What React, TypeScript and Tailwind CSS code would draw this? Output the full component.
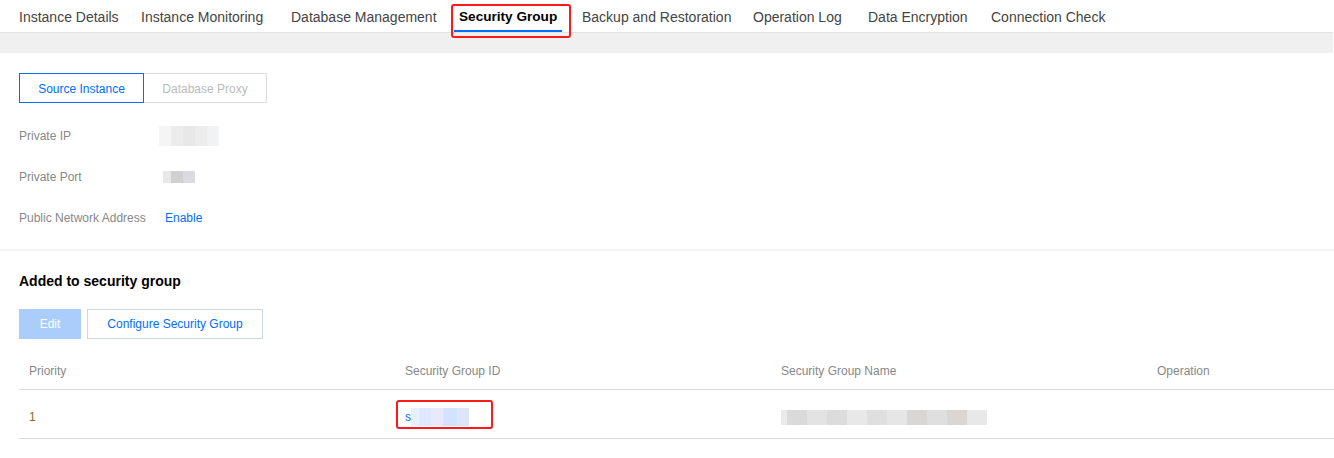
import React from "react";

const tabs = [
  { label: "Instance Details", w: 122 },
  { label: "Instance Monitoring", w: 150 },
  { label: "Database Management", w: 168 },
  { label: "Security Group", w: 123, active: true },
  { label: "Backup and Restoration", w: 171 },
  { label: "Operation Log", w: 115 },
  { label: "Data Encryption", w: 123 },
  { label: "Connection Check", w: 140 },
];

function Blur({ blocks, h }: { blocks: [number, string][]; h: string }) {
  return (
    <div className={`flex ${h} blur-[0.6px] opacity-90`}>
      {blocks.map(([w, c], i) => (
        <div key={i} style={{ width: w, backgroundColor: c }} />
      ))}
    </div>
  );
}

export default function App() {
  return (
    <div
      className="w-[1334px] h-[458px] overflow-hidden bg-white text-[#333]"
      style={{ fontFamily: '"Liberation Sans", Arial, sans-serif' }}
    >
      {/* Tabs */}
      <div className="h-[33px] border-b border-[#e2e2e2] flex pl-[14px] w-[1333px]">
        {tabs.map((t) => (
          <div key={t.label} className="relative h-[32px] flex-none" style={{ width: t.w }}>
            <div
              className={`inline-flex h-[32px] items-center px-[5px] ${
                t.active
                  ? "text-[13.6px] font-bold text-black border-b-2 border-[#006eff] pt-[4px]"
                  : "text-[14px] text-[#444] pt-[2px]"
              }`}
            >
              {t.label}
            </div>
            {t.active && (
              <div className="absolute left-[-3px] top-[4px] w-[120px] h-[34px] border-2 border-[#ff1a1a] rounded-[3px] z-10" />
            )}
          </div>
        ))}
      </div>
      <div className="h-[20px] bg-[#f0f0f0] w-[1333px]" />

      {/* Section 1 */}
      <div className="pl-[19px] pt-[20px] pb-[11px]">
        <div className="flex text-[12px]">
          <div className="w-[125px] h-[30px] pt-[2px] border border-[#006eff] text-[#006eff] flex items-center justify-center">
            Source Instance
          </div>
          <div className="w-[123px] h-[30px] pt-[2px] border border-l-0 border-[#dddddd] text-[#bbbbbb] flex items-center justify-center">
            Database Proxy
          </div>
        </div>
        <div className="mt-[12px] text-[12px]">
          <div className="h-[41px] flex items-center">
            <div className="w-[140px] text-[#888]">Private IP</div>
            <Blur
              h="h-[20px]"
              blocks={[
                [12, "#f4f4f4"],
                [12, "#ebebeb"],
                [12, "#e6e6e6"],
                [12, "#ececec"],
                [12, "#eff1f2"],
              ]}
            />
          </div>
          <div className="h-[41px] flex items-center">
            <div className="w-[144px] text-[#888]">Private Port</div>
            <Blur
              h="h-[12px]"
              blocks={[
                [8, "#e6e6e6"],
                [12, "#cccccc"],
                [12, "#d8d8dc"],
              ]}
            />
          </div>
          <div className="h-[41px] flex items-center">
            <div className="w-[146px] text-[#888]">Public Network Address</div>
            <span className="text-[#006eff]">Enable</span>
          </div>
        </div>
      </div>
      <div className="h-[2px] bg-[#f4f4f4]" />

      {/* Section 2 */}
      <div className="pl-[19px] pt-[20px]">
        <div className="text-[14px] font-bold text-black leading-[20px]">Added to security group</div>
        <div className="flex gap-[6px] mt-[18px] text-[12px]">
          <div className="w-[62px] h-[30px] bg-[#abcdfb] text-white flex items-center justify-center">Edit</div>
          <div className="w-[176px] h-[30px] border border-[#d0d6df] text-[#006eff] flex items-center justify-center">
            Configure Security Group
          </div>
        </div>
        <div className="mt-[14px] w-[1504px] text-[12px]">
          <div className="grid grid-cols-4 h-[37px] items-center border-b border-[#d8dbe2] text-[#888]">
            <div className="pl-[10px]">Priority</div>
            <div className="pl-[10px]">Security Group ID</div>
            <div className="pl-[10px]">Security Group Name</div>
            <div className="pl-[10px]">Operation</div>
          </div>
          <div className="grid grid-cols-4 h-[49px] items-center pt-[6px] border-b border-[#d8dbe2]">
            <div className="pl-[10px] text-[#8a6a14]">1</div>
            <div className="pl-[10px]">
              <span className="relative inline-flex items-center">
                <span className="text-[#006eff]">s</span>
                <Blur
                  h="h-[18px]"
                  blocks={[
                    [8, "#e6eeff"],
                    [12, "#dde6ff"],
                    [12, "#e4e8fb"],
                    [14, "#cfe0ff"],
                    [12, "#d9e4fb"],
                  ]}
                />
                <span className="absolute left-[-9px] top-[-8px] w-[97px] h-[29px] border-2 border-[#ff1a1a] rounded-[3px]" />
              </span>
            </div>
            <div className="pl-[10px]">
              <Blur
                h="h-[15px]"
                blocks={[
                  [6, "#e8e8e8"],
                  [20, "#d6d6d6"],
                  [20, "#e0e0e0"],
                  [20, "#d9d9d9"],
                  [20, "#e6e6e6"],
                  [20, "#dcdcdc"],
                  [20, "#e4e4e4"],
                  [20, "#d5d2d2"],
                  [20, "#dcdcdc"],
                  [20, "#d6d2d0"],
                  [20, "#e6e6e6"],
                ]}
              />
            </div>
            <div />
          </div>
        </div>
      </div>
    </div>
  );
}
